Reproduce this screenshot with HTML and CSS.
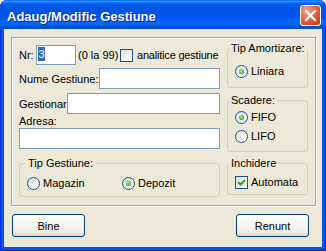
FILE: index.html
```html
<!DOCTYPE html>
<html lang="ro">
<head>
<meta charset="utf-8">
<title>Adaug/Modific Gestiune</title>
<link rel="stylesheet" href="styles.css">
</head>
<body>
<div class="window">
  <div class="titlebar">
    <span class="title">Adaug/Modific Gestiune</span>
    <span class="close">
      <svg width="19" height="19" viewBox="0 0 19 19"><path d="M5 5 L14 14 M14 5 L5 14" stroke="#fff" stroke-width="2.2" stroke-linecap="square" fill="none"/></svg>
    </span>
  </div>
  <div class="client">
    <div class="frame">
      <div class="col-left">
        <div class="row r-nr">
          <span class="lbl w-nr">Nr:</span>
          <span class="input i-nr"><span class="sel">3</span></span>
          <span class="hint">(0 la 99)</span>
          <span class="check"></span>
          <span class="ctext">analitice gestiune</span>
        </div>
        <div class="row r-nume">
          <span class="lbl w-nume">Nume Gestiune:</span>
          <span class="input i-nume"></span>
        </div>
        <div class="row r-gest">
          <span class="lbl w-gest">Gestionar:</span>
          <span class="input i-gest"></span>
        </div>
        <div class="lbl-adresa">Adresa:</div>
        <div class="input i-adresa"></div>
        <fieldset class="group g-tip">
          <legend class="leg-left">Tip Gestiune:</legend>
          <div class="gbody opts">
            <span class="opt o-mag"><span class="radio"></span>Magazin</span>
            <span class="opt"><span class="radio on"></span>Depozit</span>
          </div>
        </fieldset>
      </div>
      <div class="col-right">
        <fieldset class="group g-amort">
          <legend class="leg-right">Tip Amortizare:</legend>
          <div class="gbody">
            <div class="opt"><span class="radio on"></span>Liniara</div>
          </div>
        </fieldset>
        <fieldset class="group g-scad">
          <legend class="leg-right">Scadere:</legend>
          <div class="gbody">
            <div class="opt"><span class="radio on"></span>FIFO</div>
            <div class="opt o-lifo"><span class="radio"></span>LIFO</div>
          </div>
        </fieldset>
        <fieldset class="group g-inch">
          <legend class="leg-right">Inchidere</legend>
          <div class="gbody">
            <div class="opt"><span class="check on"><svg width="11" height="11" viewBox="0 0 11 11"><path d="M2 5 L4.5 7.5 L9 3" stroke="#21A121" stroke-width="2" fill="none"/></svg></span>Automata</div>
          </div>
        </fieldset>
      </div>
    </div>
    <div class="buttons">
      <span class="btn">Bine</span>
      <span class="btn">Renunt</span>
    </div>
  </div>
</div>
</body>
</html>
```
FILE: styles.css
```css
html, body {
  margin: 0;
  padding: 0;
  background: #F4F0DC;
}
body {
  font-family: "Liberation Sans", Arial, sans-serif;
  font-size: 11px;
  color: #000;
}
.window {
  width: 326px;
  height: 251px;
  box-sizing: border-box;
  background: #0055E5;
  border-radius: 7px 7px 0 0;
  display: flex;
  flex-direction: column;
  overflow: hidden;
  box-shadow: inset 1px 0 #0831D9, inset -1px 0 #001EA0, inset 0 -1px #001EA0;
}
.titlebar {
  height: 29px;
  flex: none;
  display: flex;
  align-items: flex-start;
  justify-content: space-between;
  padding: 0 5px 0 7px;
  background: linear-gradient(to bottom, #0058EE 0%, #3593FF 4%, #288EFF 6%, #127DFF 8%, #036FFC 10%, #0262EE 14%, #0057E5 20%, #0054E3 24%, #0055EB 56%, #005BF5 66%, #026AFE 76%, #0062EF 86%, #0052D6 92%, #0045C0 96%, #0055E5 100%);
  border-radius: 7px 7px 0 0;
}
.title {
  margin-top: 9px;
  line-height: 15px;
  color: #fff;
  font-weight: bold;
  font-size: 13px;
  text-shadow: 1px 1px #0A1E8C;
}
.close {
  margin-top: 5px;
  width: 21px;
  height: 21px;
  box-sizing: border-box;
  border: 1px solid #fff;
  border-radius: 3px;
  background: radial-gradient(circle at 30% 25%, #F2A488 0%, #E46E4C 40%, #D8482A 75%, #C13A1C 100%);
  display: flex;
  align-items: center;
  justify-content: center;
}
.client {
  flex: 1;
  margin: 0 4px 4px;
  background: #ECE9D8;
  padding: 8px 6px 0 7px;
}
.frame {
  height: 169px;
  box-sizing: border-box;
  border: 1px solid #ACA899;
  box-shadow: inset 1px 1px #fff, 1px 1px #fff;
  display: flex;
  gap: 7px;
  padding: 0 7px;
}
.col-left {
  width: 201px;
  flex: none;
  padding-top: 7px;
}
.col-right {
  width: 81px;
  flex: none;
  padding-top: 4px;
  display: flex;
  flex-direction: column;
}
.row {
  display: flex;
  align-items: center;
  white-space: nowrap;
}
.r-nr { height: 20px; }
.r-nume { height: 21px; margin-top: 3px; }
.r-gest { height: 21px; margin-top: 4px; }
.lbl { flex: none; white-space: nowrap; }
.w-nr { width: 17px; }
.w-nume { width: 80px; }
.w-gest { width: 48px; }
.input {
  display: block;
  box-sizing: border-box;
  border: 1px solid #7F9DB9;
  background: #fff;
  height: 21px;
  flex: none;
}
.i-nr {
  width: 40px;
  height: 20px;
  padding: 1px 0 0 1px;
}
.sel {
  display: block;
  width: 7px;
  height: 14px;
  line-height: 14px;
  text-align: center;
  background: #316AC5;
  color: #fff;
}
.i-nume { width: 121px; }
.i-gest { width: 153px; }
.i-adresa { width: 201px; }
.hint {
  width: 42px;
  margin-left: 2px;
  flex: none;
  white-space: nowrap;
}
.ctext {
  flex: none;
  white-space: nowrap;
  letter-spacing: -0.2px;
}
.check {
  width: 13px;
  height: 13px;
  box-sizing: border-box;
  border: 1px solid #1C5180;
  background: linear-gradient(135deg, #DCDCD7 0%, #F4F4F0 60%, #fff 100%);
  margin-right: 4px;
  flex: none;
  display: flex;
  align-items: center;
  justify-content: center;
}
.check.on { margin-right: 3px; }
.lbl-adresa {
  margin-top: 1px;
  line-height: 13px;
}
.group {
  margin: 0;
  padding: 0;
  min-width: 0;
  box-sizing: border-box;
  border: 1px solid #D0D0BF;
  border-radius: 3px;
}
.group legend {
  line-height: 13px;
  padding: 0 2px;
  white-space: nowrap;
}
.leg-left { margin-left: 6px; }
.leg-right { margin-left: 1px; }
.gbody { padding-left: 7px; }
.g-tip {
  margin-top: 8px;
  height: 40px;
  padding-top: 5px;
}
.opts { display: flex; }
.opt {
  display: flex;
  align-items: center;
  height: 16px;
  white-space: nowrap;
}
.o-mag { width: 95px; }
.radio {
  width: 13px;
  height: 13px;
  box-sizing: border-box;
  border-radius: 50%;
  border: 1px solid #1C5180;
  background: linear-gradient(135deg, #DCDCD7 0%, #F4F4F0 60%, #fff 100%);
  margin-right: 3px;
  flex: none;
  display: flex;
  align-items: center;
  justify-content: center;
}
.radio.on::after {
  content: "";
  width: 5px;
  height: 5px;
  border-radius: 50%;
  background: radial-gradient(circle at 40% 40%, #B6F0B0 0%, #4FC24F 45%, #21A121 100%);
}
.g-amort {
  height: 46px;
  padding-top: 8px;
}
.g-scad {
  margin-top: 6px;
  height: 58px;
  padding-top: 2px;
}
.o-lifo { margin-top: 3px; }
.g-inch {
  margin-top: 5px;
  height: 38px;
  padding-top: 4px;
}
.buttons {
  display: flex;
  justify-content: space-between;
  margin-top: 8px;
  padding: 0 7px 0 1px;
}
.btn {
  width: 73px;
  height: 23px;
  box-sizing: border-box;
  border: 1px solid #003C74;
  border-radius: 3px;
  background: linear-gradient(to bottom, #FFFFFF 0%, #F6F5F1 45%, #EEEDE7 80%, #D8D3C8 100%);
  display: flex;
  align-items: center;
  justify-content: center;
}
```
